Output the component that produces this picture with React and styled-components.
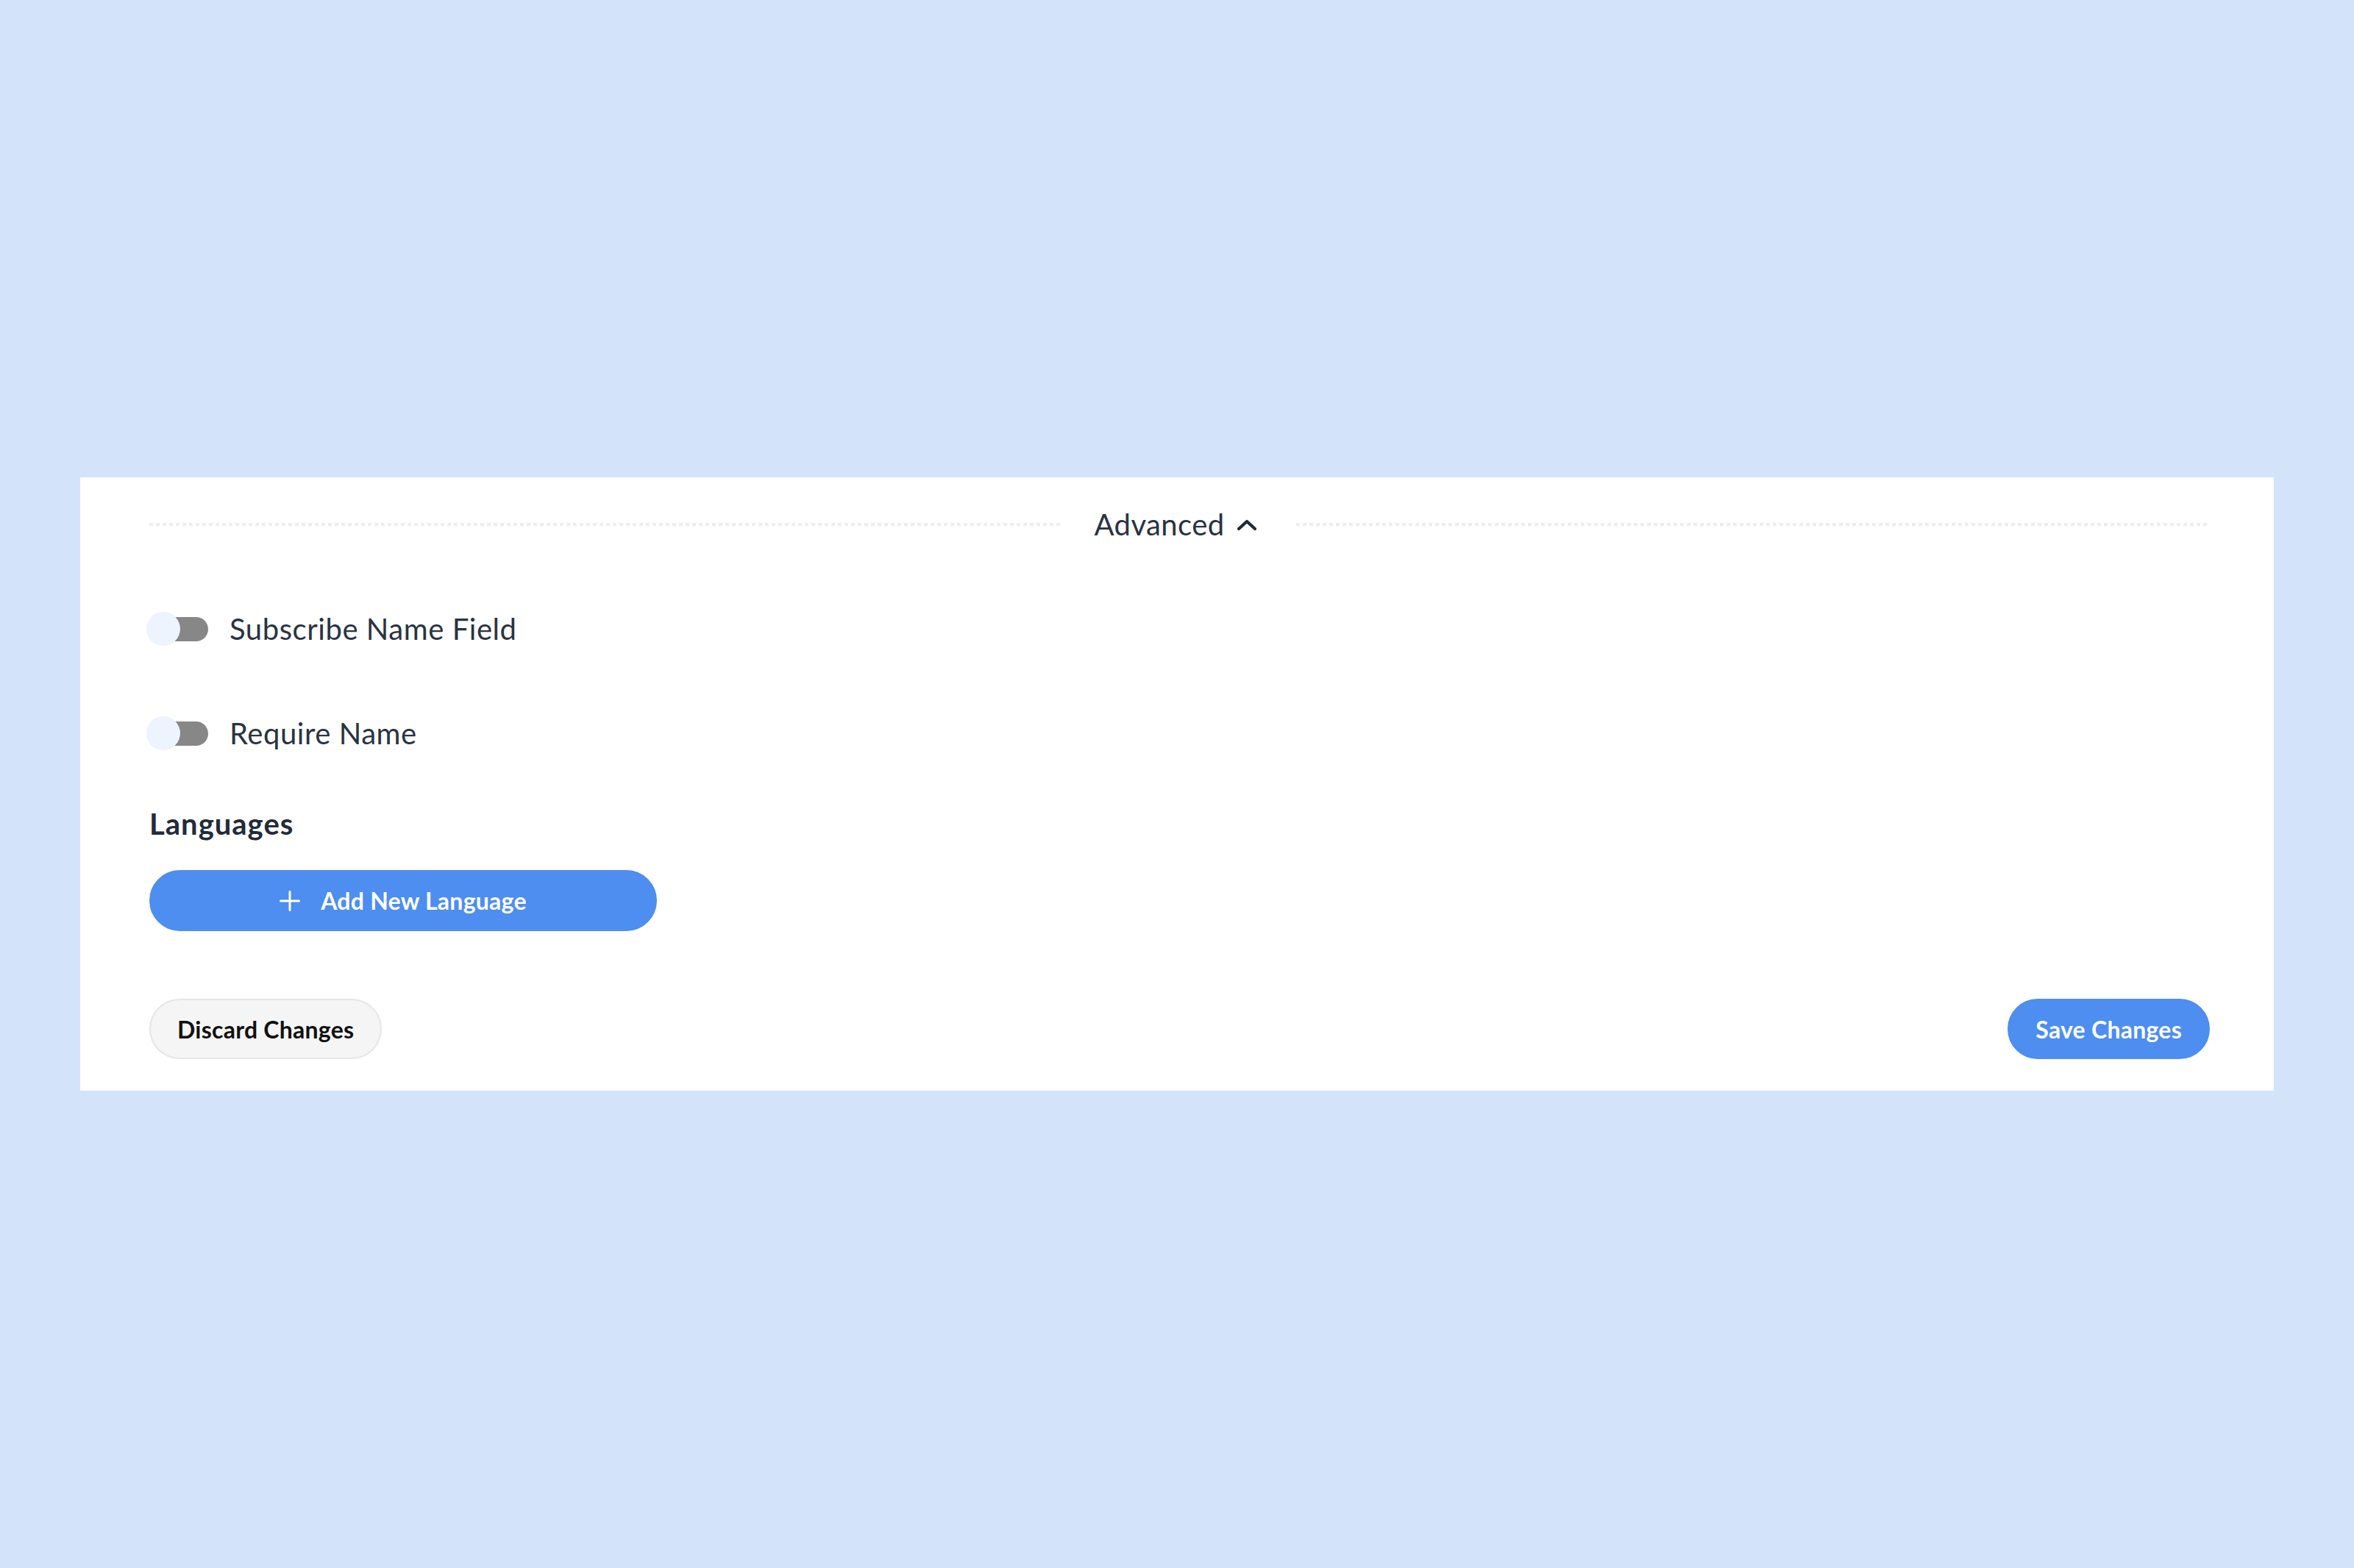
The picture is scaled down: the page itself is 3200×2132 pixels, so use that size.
import React from "react";
import styled, { createGlobalStyle } from "styled-components";

const Global = createGlobalStyle`
  html, body { margin: 0; padding: 0; }
  body { background: #d3e3fa; font-family: Lato, "Open Sans", sans-serif; }
  * { box-sizing: border-box; }
`;

const Page = styled.div`
  min-height: 2132px;
  display: flex;
  align-items: center;
  padding: 0 109px 0 109px;
`;

const Card = styled.section`
  flex: 1;
  background: #ffffff;
  padding: 30px 87px 43px 94px;
  display: flex;
  flex-direction: column;
`;

const Header = styled.div`
  height: 68px;
  display: flex;
  align-items: center;
`;

const DashLine = styled.div`
  flex: 1;
  height: 4px;
  background: repeating-linear-gradient(to right, #ededed 0 5px, transparent 5px 9px);
`;

const HeaderLabel = styled.button`
  display: flex;
  align-items: center;
  gap: 11px;
  margin: 0 47px 0 43px;
  padding: 0;
  border: 0;
  background: none;
  font-family: Lato, sans-serif;
  font-size: 40px;
  line-height: 48px;
  letter-spacing: 0.4px;
  color: #2a3342;
  cursor: pointer;
`;

const ChevronBox = styled.span`
  width: 40px;
  height: 40px;
  display: flex;
  align-items: center;
  justify-content: center;
`;

const ToggleList = styled.div`
  display: flex;
  flex-direction: column;
  gap: 96px;
  margin-top: 85px;
`;

const ToggleRow = styled.label`
  display: flex;
  align-items: center;
  height: 46px;
`;

const Switch = styled.span`
  position: relative;
  width: 80px;
  height: 46px;
  flex: none;
`;

const Track = styled.span`
  position: absolute;
  left: 0;
  right: 0;
  top: 6.5px;
  height: 33px;
  border-radius: 17px;
  background: ${(p) => (p.$on ? "#4d8ef0" : "#878787")};
`;

const Knob = styled.span`
  position: absolute;
  top: 0;
  left: -4px;
  width: 46px;
  height: 46px;
  border-radius: 50%;
  background: #eef4fe;
  box-shadow: 0 0 1px rgba(0, 0, 0, 0.06);
`;

const ToggleText = styled.span`
  margin-left: 29px;
  font-size: 40px;
  line-height: 48px;
  letter-spacing: 0.55px;
  color: #2a3342;
`;

const SectionTitle = styled.h3`
  margin: 76px 0 0 0;
  font-size: 40px;
  line-height: 48px;
  font-weight: 700;
  letter-spacing: 1px;
  color: #232b38;
`;

const PillButton = styled.button`
  height: 82px;
  border-radius: 999px;
  display: flex;
  align-items: center;
  justify-content: center;
  gap: 28px;
  padding: 0 36px;
  font-family: Lato, sans-serif;
  font-weight: 700;
  font-size: 32px;
  letter-spacing: 0.25px;
  cursor: pointer;
  border: 2px solid ${(p) => (p.$variant === "ghost" ? "#e6e6e6" : "#4d8ef0")};
  background: ${(p) => (p.$variant === "ghost" ? "#f5f5f5" : "#4d8ef0")};
  color: ${(p) => (p.$variant === "ghost" ? "#111111" : "#ffffff")};
`;

const AddButton = styled(PillButton)`
  width: 690px;
  height: 83px;
  margin-top: 39px;
`;

const Footer = styled.div`
  display: flex;
  justify-content: space-between;
  align-items: center;
  margin-top: 92px;
`;

function Toggle({ label, on }) {
  return (
    <ToggleRow>
      <Switch>
        <Track $on={on} />
        <Knob />
      </Switch>
      <ToggleText>{label}</ToggleText>
    </ToggleRow>
  );
}

export default function App() {
  return (
    <>
      <Global />
      <Page>
        <Card>
          <Header>
            <DashLine />
            <HeaderLabel>
              Advanced
              <ChevronBox>
                <svg width="28" height="18" viewBox="0 0 28 18">
                  <polyline
                    points="3,15 14,5 25,15"
                    fill="none"
                    stroke="#1f2937"
                    strokeWidth="4.2"
                    strokeLinecap="round"
                    strokeLinejoin="round"
                  />
                </svg>
              </ChevronBox>
            </HeaderLabel>
            <DashLine />
          </Header>
          <ToggleList>
            <Toggle label="Subscribe Name Field" />
            <Toggle label="Require Name" />
          </ToggleList>
          <SectionTitle>Languages</SectionTitle>
          <AddButton>
            <svg width="28" height="28" viewBox="0 0 28 28">
              <path d="M14 1.5v25M1.5 14h25" stroke="#ffffff" strokeWidth="3" strokeLinecap="round" />
            </svg>
            Add New Language
          </AddButton>
          <Footer>
            <PillButton $variant="ghost">Discard Changes</PillButton>
            <PillButton>Save Changes</PillButton>
          </Footer>
        </Card>
      </Page>
    </>
  );
}
